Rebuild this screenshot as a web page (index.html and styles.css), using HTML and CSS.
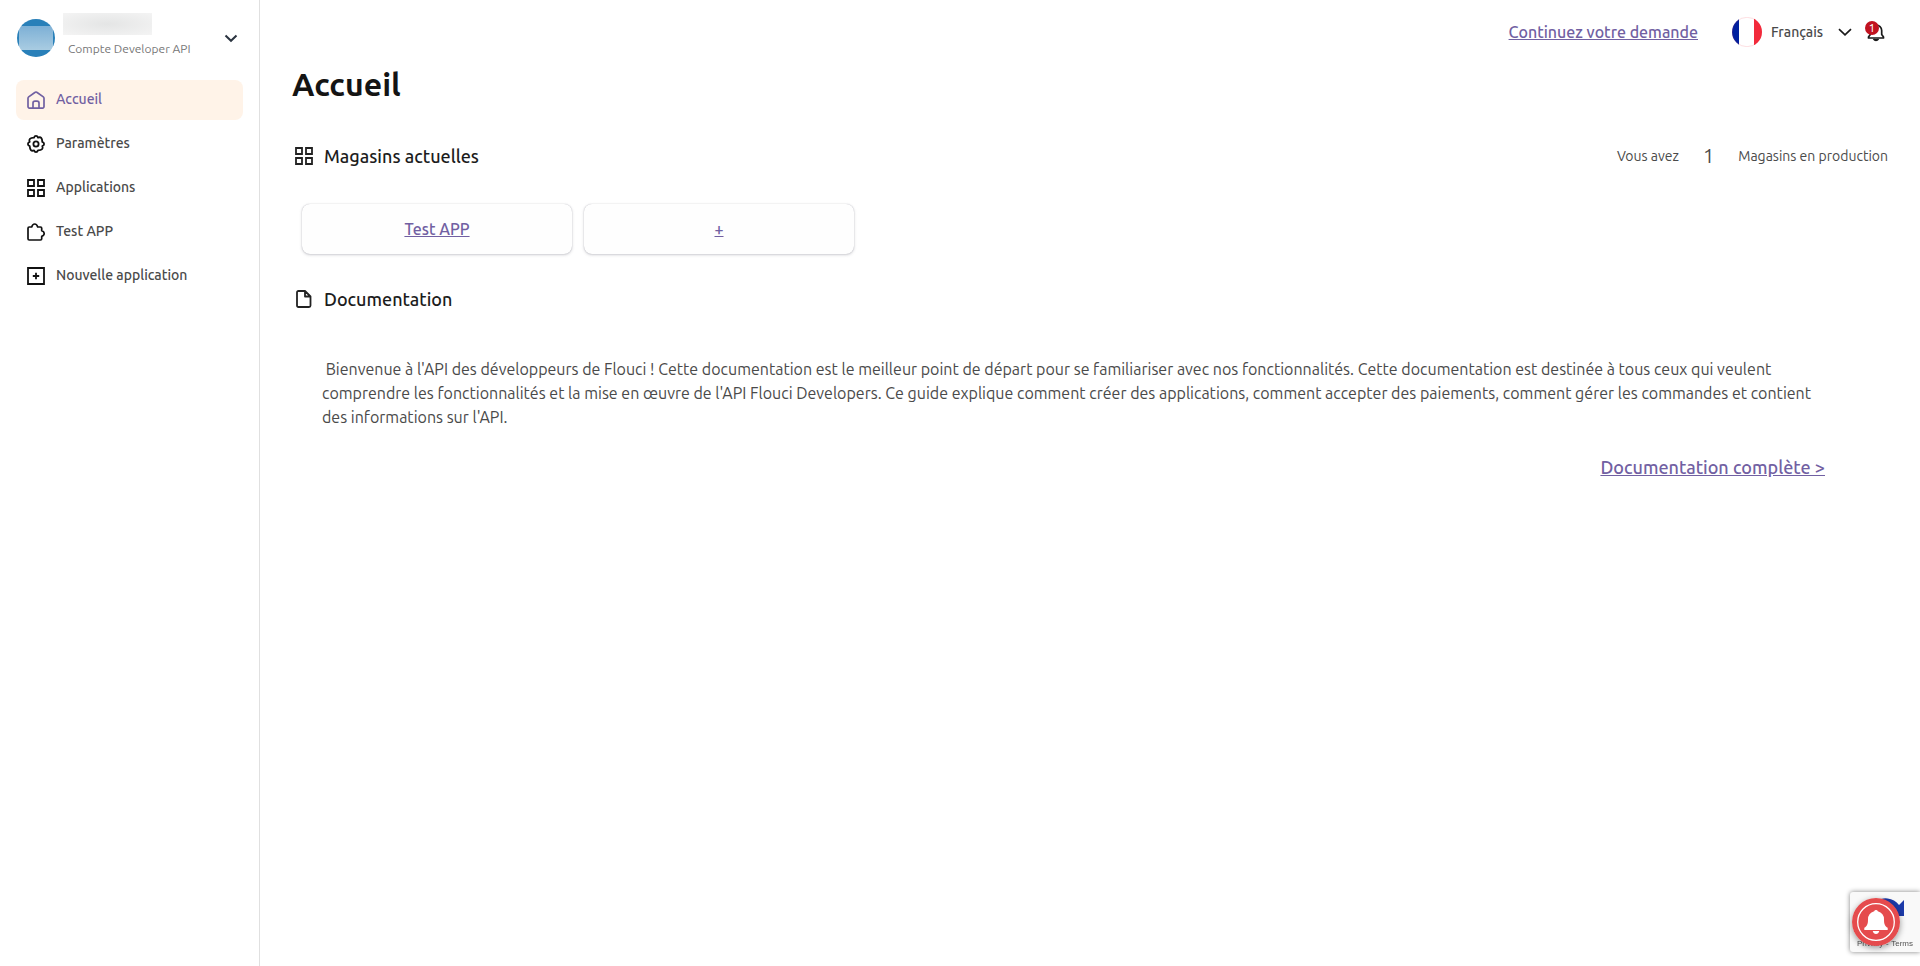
FILE: index.html
```html
<!DOCTYPE html>
<html lang="fr">
<head>
  <meta charset="UTF-8" />
  <meta name="viewport" content="width=device-width, initial-scale=1" />
  <title>Accueil</title>
  <link rel="stylesheet" href="styles.css">
</head>
<body>
  <aside class="sidebar">
    <div class="profile">
      <div class="avatar"></div>
      <div class="profile-info">
        <div class="profile-name"></div>
        <div class="profile-type">Compte Developer API</div>
      </div>
      <button class="profile-toggle" type="button" aria-label="Changer de compte">
        <svg width="14" height="14" viewBox="0 0 14 14" fill="none" stroke="#2b3440" stroke-width="2"><path d="M1.500 4.500 7 9.800l5.500-5.300"/></svg>
      </button>
    </div>
    <nav class="menu">
      <a href="#" class="menu-item active">
        <svg class="icon" viewBox="0 0 18 18" fill="none" stroke="currentColor" stroke-width="1.700" stroke-linejoin="round"><path d="M1 7.200Q1 6.500 1.700 5.900L8.200 1.300q.8-.6 1.600 0l6.500 4.600q.7.600.7 1.300v8.300a1.700 1.700 0 0 1-1.700 1.700H2.700A1.700 1.700 0 0 1 1 15.500z"/><path d="M6 17v-4.900A2 2 0 0 1 8 10.100h2a2 2 0 0 1 2 2V17"/></svg>
        <span>Accueil</span>
      </a>
      <a href="#" class="menu-item">
        <svg class="icon" viewBox="0 0 18 18" fill="none" stroke="#111" stroke-width="1.800" stroke-linejoin="round"><path d="M7 2.600Q7.600 .9 9 .9T11 2.600Q13.200 1.800 14.200 2.900T15.300 6.900Q17.100 7.600 17.100 9T15.300 11.100Q16.200 13.200 15.100 14.200T11 15.400Q10.400 17.100 9 17.100T7 15.400Q4.900 16.200 3.900 15.100T2.700 11.100Q.9 10.400 .9 9T2.700 6.900Q1.800 4.900 2.900 3.800T7 2.600z"/><circle cx="9" cy="9" r="2.600"/></svg>
        <span>Paramètres</span>
      </a>
      <a href="#" class="menu-item">
        <svg class="icon" viewBox="0 0 18 18" fill="none" stroke="#111" stroke-width="1.800"><path d="M1 1h6v6H1zM11 1h6v6h-6zM1 11h6v6H1zM11 11h6v6h-6z"/></svg>
        <span>Applications</span>
      </a>
      <a href="#" class="menu-item">
        <svg class="icon" viewBox="0 0 18 18" fill="none" stroke="#111" stroke-width="1.700" stroke-linejoin="round"><path d="M1 5.200q0-1.200 1.200-1.200h2.500C5.300 1.900 6.300 1 7.700 1s2.400.9 3 3h2.800q1.200 0 1.200 1.200v2.600C16.500 8.300 17.200 9.300 17.200 10.600s-.7 2.300-2.500 2.800v2.400q0 1.200-1.200 1.200H2.200Q1 17 1 15.800z"/></svg>
        <span>Test APP</span>
      </a>
      <a href="#" class="menu-item">
        <svg class="icon" viewBox="0 0 18 18" fill="none" stroke="#111" stroke-width="1.800"><path d="M1 1h16v16H1zM9 5.800v6.400M5.800 9h6.400"/></svg>
        <span>Nouvelle application</span>
      </a>
    </nav>
  </aside>

  <main class="content">
    <header class="topbar">
      <a href="#" class="link">Continuez votre demande</a>
      <div class="lang">
        <svg class="flag" viewBox="0 0 30 30"><clipPath id="round"><circle cx="15" cy="15" r="15"/></clipPath><g clip-path="url(#round)"><path fill="#fff" d="M0 0h30v30H0z"/><path fill="#00209f" d="M0 0h7v30H0z"/><path fill="#f22a3b" d="M22 0h8v30h-8z"/></g><circle cx="15" cy="15" r="14.700" fill="none" stroke="#f22a3b" stroke-opacity=".25" stroke-width=".6"/></svg>
        <select class="lang-select" aria-label="Langue">
          <option>Français</option>
        </select>
        <svg class="lang-arrow" viewBox="0 0 14 14" fill="none" stroke="#1a1a1a" stroke-width="1.700"><path d="M1 4.200l6 5.600 6-5.600"/></svg>
      </div>
      <button class="notif" type="button" aria-label="Notifications">
        <svg viewBox="0 0 20 20" fill="none" stroke="#1a1a1a" stroke-width="1.700" stroke-linejoin="round"><path d="M2.500 16h15v-1L15.700 12.500V8.500A5.500 5.500 0 0 0 10 3 5.500 5.500 0 0 0 4.300 8.500v4l-1.800 2.500z"/><path d="M7.500 17q2.500 3 5 0" fill="#1a1a1a"/></svg>
        <span class="notif-count">1</span>
      </button>
    </header>

    <h1>Accueil</h1>

    <section class="stores">
      <div class="section-head">
        <svg class="icon" viewBox="0 0 18 18" fill="none" stroke="#222" stroke-width="1.800"><path d="M1 1h6v6H1zM11 1h6v6h-6zM1 11h6v6H1zM11 11h6v6h-6z"/></svg>
        <h2>Magasins actuelles</h2>
        <p class="count">Vous avez <span class="count-value">1</span> Magasins en production</p>
      </div>
      <div class="cards">
        <div class="card"><a href="#" class="link">Test APP</a></div>
        <div class="card"><a href="#" class="link">+</a></div>
      </div>
    </section>

    <section class="docs">
      <div class="section-head">
        <svg class="icon" viewBox="0 0 18 18" fill="none" stroke="#222" stroke-width="1.800" stroke-linejoin="round"><path d="M3.500 1H10l5.500 5.500v9q0 1.500-1.500 1.500H3.500Q2 17 2 15.500v-13Q2 1 3.500 1zM10 1v5.500h5.500"/></svg>
        <h2>Documentation</h2>
      </div>
      <div class="docs-body">
        <p>&nbsp;Bienvenue à l'API des développeurs de Flouci ! Cette documentation est le meilleur point de départ pour se familiariser avec nos fonctionnalités. Cette documentation est destinée à tous ceux qui veulent comprendre les fonctionnalités et la mise en œuvre de l'API Flouci Developers. Ce guide explique comment créer des applications, comment accepter des paiements, comment gérer les commandes et contient des informations sur l'API.</p>
        <a href="#" class="link docs-link">Documentation complète &gt;</a>
      </div>
    </section>
  </main>

  <div class="captcha">
    <svg class="captcha-logo" viewBox="0 0 40 40"><path fill="#1c3aa9" d="M36 4v16H22l5-5a10 10 0 0 0-14-3L7 6a17 17 0 0 1 24 3z"/></svg>
    <div class="captcha-links"><a href="#">Privacy</a><span>-</span><a href="#">Terms</a></div>
  </div>
  <button class="bell" type="button" aria-label="Activer les notifications">
    <svg viewBox="0 0 48 48"><circle cx="24" cy="24" r="24" fill="#e54b4d"/><circle cx="24" cy="24" r="18.300" fill="none" stroke="#fff" stroke-width="1.300"/><path fill="#fff" d="M24 12q1.500 0 1.800 1.300Q32 15 32 21.500c0 5 1 6.500 3.700 8.300V32H12.300v-2.200C15 28 16 26.500 16 21.500q0-6.500 6.200-8.200Q22.500 12 24 12zM20.700 33h6.600q-.8 3-3.300 3t-3.300-3z"/></svg>
  </button>
</body>
</html>
```

FILE: styles.css
```css
* {
  margin: 0;
  padding: 0;
  box-sizing: border-box;
}
body {
  display: flex;
  min-height: 100vh;
  background: #fff;
  color: #4a4a4a;
  font-family: Ubuntu, "Noto Sans", sans-serif;
  font-size: 16px;
  line-height: 24px;
}
button {
  border: 0;
  background: none;
  font-family: inherit;
  cursor: pointer;
}
svg {
  display: block;
}
.icon {
  width: 18px;
  height: 18px;
  flex: none;
}
.link {
  color: #7160a2;
  font-weight: 500;
}

/* sidebar */
.sidebar {
  width: 260px;
  flex: none;
  padding: 13px 16px;
  border-right: 1px solid #e0e0e0;
}
.profile {
  display: flex;
  align-items: center;
  height: 50px;
  margin-bottom: 17px;
}
.avatar {
  width: 38px;
  height: 38px;
  margin-left: 1px;
  border-radius: 50%;
  background: linear-gradient(#7db0d6, #a9cce2) center / 34px 24px no-repeat, #2980b9;
}
.profile-info {
  flex: 1;
  align-self: flex-start;
  margin-left: 8px;
}
.profile-name {
  width: 89px;
  height: 22px;
  background: radial-gradient(#e4e5e5, #f4f4f4);
}
.profile-type {
  padding: 2px 0 0 5px;
  font-size: 12px;
  color: #777;
  white-space: nowrap;
}
.profile-toggle {
  margin-right: 5px;
}
.menu {
  display: flex;
  flex-direction: column;
  gap: 4px;
}
.menu-item {
  display: flex;
  align-items: center;
  gap: 11px;
  height: 40px;
  padding: 0 11px;
  border-radius: 8px;
  color: #4a4a4a;
  font-size: 14px;
  font-weight: 500;
  text-decoration: none;
}
.menu-item span {
  padding-bottom: 2px;
}
.menu-item.active {
  background: #fff3e8;
  color: #7160a2;
}

/* content */
.content {
  flex: 1;
  min-width: 0;
  padding: 16px 32px 32px;
}
.topbar {
  display: flex;
  justify-content: flex-end;
  align-items: center;
  height: 32px;
}
.lang {
  display: flex;
  align-items: center;
  margin: 0 14px 0 34px;
}
.flag {
  width: 30px;
  height: 30px;
}
.lang-select {
  appearance: none;
  margin: 0 14px 0 9px;
  border: 0;
  background: none;
  color: #4a4a4a;
  font-family: inherit;
  font-size: 14px;
  font-weight: 500;
}
.lang-arrow {
  width: 14px;
  height: 14px;
}
.notif {
  position: relative;
  margin-right: 2px;
}
.notif svg {
  width: 20px;
  height: 20px;
}
.notif-count {
  position: absolute;
  top: -1px;
  left: -1px;
  width: 14px;
  height: 14px;
  border-radius: 50%;
  background: #c1121f;
  color: #fff;
  font-size: 12px;
  line-height: 14px;
}
h1 {
  margin-top: 16px;
  color: #141414;
  font-size: 32px;
  line-height: 40px;
}
h2 {
  color: #1c1c1c;
  font-size: 18px;
  font-weight: 500;
}
.section-head {
  display: flex;
  align-items: center;
  gap: 11px;
  height: 32px;
  padding-left: 3px;
}
.stores {
  margin-top: 36px;
}
.count {
  display: flex;
  align-items: center;
  gap: 24px;
  margin-left: auto;
  font-size: 14px;
}
.count-value {
  font-size: 20px;
}
.cards {
  display: flex;
  gap: 12px;
  margin: 32px 10px 0;
}
.card {
  display: flex;
  align-items: center;
  justify-content: center;
  width: 270px;
  height: 50px;
  border-radius: 8px;
  background: #fefefe;
  box-shadow: 0 0 1px rgba(40, 41, 61, 0.3), 0 1px 3px rgba(96, 97, 112, 0.3);
}
.docs {
  margin-top: 29px;
}
.docs-body {
  display: flex;
  flex-direction: column;
  padding: 42px 60px 0 30px;
}
.docs-link {
  align-self: flex-end;
  margin: 26px 3px 0 0;
  font-size: 18px;
}

/* floating widgets */
.captcha {
  position: fixed;
  right: 0;
  bottom: 14px;
  width: 70px;
  height: 60px;
  border-radius: 3px 0 0 3px;
  background: #f9f9f9;
  box-shadow: 0 0 5px #808080;
}
.captcha-logo {
  width: 40px;
  height: 40px;
  margin: 4px 0 0 18px;
}
.captcha-links {
  display: flex;
  justify-content: space-between;
  padding: 2px 7px 0;
  color: #555;
  font-family: "Liberation Sans", sans-serif;
  font-size: 8px;
  line-height: 12px;
}
.captcha-links a {
  color: inherit;
  text-decoration: none;
}
.bell {
  position: fixed;
  right: 20px;
  bottom: 20px;
  width: 48px;
  height: 48px;
  border-radius: 50%;
  box-shadow: 0 2px 6px rgba(0, 0, 0, 0.4);
}
```
